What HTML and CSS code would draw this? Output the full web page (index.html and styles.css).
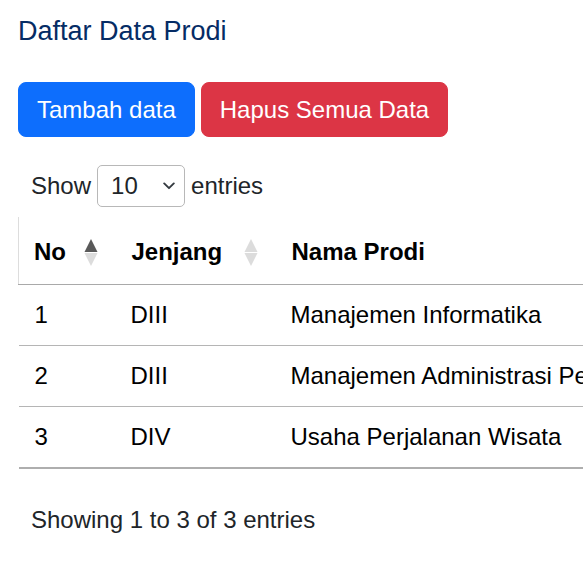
FILE: index.html
```html
<!DOCTYPE html>
<html lang="id">
<head>
<meta charset="utf-8">
<title>Daftar Data Prodi</title>
<link rel="stylesheet" href="styles.css">
</head>
<body>
<main class="page">
  <h1 class="title">Daftar Data Prodi</h1>
  <div class="actions">
    <button class="btn btn-primary">Tambah data</button>
    <button class="btn btn-danger">Hapus Semua Data</button>
  </div>
  <div class="dt-length">
    <span>Show</span>
    <div class="dt-select">
      <span>10</span>
      <svg width="12" height="8" viewBox="0 0 12 8"><path d="M1.2 1.4 L6 6.2 L10.8 1.4" fill="none" stroke="#343a40" stroke-width="1.9" stroke-linecap="round" stroke-linejoin="round"/></svg>
    </div>
    <span>entries</span>
  </div>
  <table class="dt-table">
    <colgroup>
      <col class="c-no">
      <col class="c-jenjang">
      <col class="c-nama">
    </colgroup>
    <thead>
      <tr>
        <th class="first"><div class="th-inner"><span>No</span>
          <svg class="sort" width="14" height="27" viewBox="0 0 14 27"><polygon points="7,0 13.5,13 0.5,13" fill="#595959"/><polygon points="0.5,14 13.5,14 7,27" fill="#dcdcdc"/></svg></div></th>
        <th><div class="th-inner"><span>Jenjang</span>
          <svg class="sort" width="14" height="27" viewBox="0 0 14 27"><polygon points="7,0 13.5,13 0.5,13" fill="#dcdcdc"/><polygon points="0.5,14 13.5,14 7,27" fill="#dcdcdc"/></svg></div></th>
        <th><div class="th-inner"><span>Nama Prodi</span></div></th>
      </tr>
    </thead>
    <tbody>
      <tr><td>1</td><td>DIII</td><td>Manajemen Informatika</td></tr>
      <tr><td>2</td><td>DIII</td><td>Manajemen Administrasi Perkantoran</td></tr>
      <tr class="last"><td>3</td><td>DIV</td><td>Usaha Perjalanan Wisata</td></tr>
    </tbody>
  </table>
  <div class="dt-info">Showing 1 to 3 of 3 entries</div>
</main>
</body>
</html>
```

FILE: styles.css
```css
html, body {
  margin: 0;
  padding: 0;
  overflow: hidden;
  background: #fff;
}
body {
  font-family: "Liberation Sans", Arial, sans-serif;
  color: #212529;
  font-size: 24px;
}
.page {
  padding: 15px 0 0 18px;
  width: 800px;
}
.title {
  margin: 0;
  font-size: 27px;
  line-height: 32px;
  font-weight: 400;
  color: #052c65;
}
.actions {
  margin-top: 35px;
  display: flex;
  gap: 6px;
}
.btn {
  font-family: inherit;
  font-size: 24px;
  line-height: 35px;
  padding: 9px 18px;
  border: 1px solid transparent;
  border-radius: 8px;
  color: #fff;
  cursor: pointer;
}
.btn-primary {
  background: #0d6efd;
  border-color: #0d6efd;
}
.btn-danger {
  background: #dc3545;
  border-color: #dc3545;
}
.dt-length {
  margin-top: 28px;
  padding-left: 13px;
  display: flex;
  align-items: center;
  gap: 6px;
  line-height: 36px;
}
.dt-select {
  box-sizing: border-box;
  width: 88px;
  height: 42px;
  border: 1px solid #b8b8b8;
  border-radius: 5px;
  display: flex;
  align-items: center;
  justify-content: space-between;
  padding: 0 9px 0 13px;
  color: #212529;
}
.dt-table {
  margin-top: 10px;
  width: 760px;
  table-layout: fixed;
  border-collapse: collapse;
}
.c-no { width: 98px; }
.c-jenjang { width: 160px; }
.dt-table th {
  text-align: left;
  font-weight: 700;
  color: #000;
  padding: 17px 19px 14px 15px;
  line-height: 36px;
  border-bottom: 1px solid #a9a9a9;
}
.dt-table th.first {
  border-left: 1px solid #dddddd;
}
.th-inner {
  display: flex;
  align-items: center;
  justify-content: space-between;
}
.sort {
  display: block;
  flex: none;
}
.dt-table td {
  padding: 12px 15px 12px 14px;
  line-height: 36px;
  color: #000;
  border-bottom: 1px solid #b5b5b5;
  white-space: nowrap;
  overflow: hidden;
}
.dt-table td:first-child {
  padding-left: 16px;
}
.dt-table tr.last td {
  border-bottom: 2px solid #aeaeae;
}
.dt-info {
  margin-top: 33px;
  padding-left: 13px;
  line-height: 36px;
}
```
